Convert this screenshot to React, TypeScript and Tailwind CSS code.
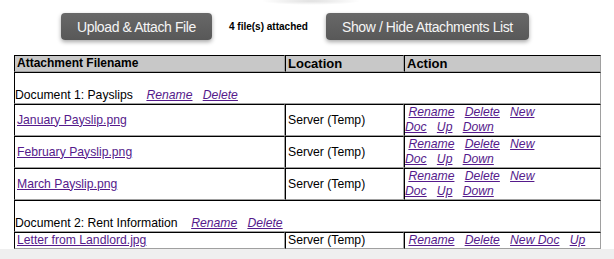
import React from "react";

const NB = "\u00a0";

function L({ children, italic = false }: { children: React.ReactNode; italic?: boolean }) {
  return (
    <a href="#" className={`text-[#551a8b] underline ${italic ? "italic" : ""}`}>
      {children}
    </a>
  );
}

const bd =
  "border-t border-l border-r border-b border-t-black border-l-black border-r-[#a0a0a0] border-b-[#a0a0a0] py-0 align-middle";
const td = `${bd} px-[2px]`;

function Actions({ last = false }: { last?: boolean }) {
  return (
    <td className={`${bd} px-0`}>
      {NB}
      <L italic>Rename</L>
      {NB + NB + NB}
      <L italic>Delete</L>
      {NB + NB + NB}
      <L italic>New Doc</L>
      {NB + NB + NB}
      <L italic>Up</L>
      {!last && (
        <>
          {NB + NB + NB}
          <L italic>Down</L>
        </>
      )}
    </td>
  );
}

function FileRow({ name, last = false }: { name: string; last?: boolean }) {
  return (
    <tr className={last ? "h-[17px]" : "h-[32px]"}>
      <td className={td}>
        <L>{name}</L>
      </td>
      <td className={td}>Server (Temp)</td>
      <Actions last={last} />
    </tr>
  );
}

function DocRow({ title }: { title: string }) {
  return (
    <tr className="h-[32px]">
      <td colSpan={3} className={`${bd} px-0`}>
        <br />
        {title}
        {NB + NB + NB + NB}
        <L italic>Rename</L>
        {NB + NB + NB}
        <L italic>Delete</L>
      </td>
    </tr>
  );
}

const btn =
  "h-[27px] rounded-[4px] bg-[linear-gradient(#686868,#585858)] text-[#f5f5f5] text-[14px] tracking-[-0.4px] leading-none shadow-[0_2px_4px_rgba(0,0,0,0.35)]";

export default function App() {
  return (
    <div className="w-[614px] h-[259px] overflow-hidden bg-white font-['Liberation_Sans',Arial,sans-serif] text-black flex flex-col">
      <div className="h-0 flex justify-center">
        <div className="w-[100px] h-[8px] -mt-[3px] ml-[8px] rounded-full bg-[radial-gradient(ellipse_at_center,rgba(0,0,0,0.12),rgba(0,0,0,0)_70%)]" />
      </div>
      <div className="flex items-center pl-[61px] pt-[13px] h-[27px] box-content">
        <button className={`${btn} w-[151px]`}>Upload &amp; Attach File</button>
        <span className="ml-[17px] text-[10px] font-bold leading-none">4 file(s) attached</span>
        <button className={`${btn} ml-[18px] w-[203px]`}>Show / Hide Attachments List</button>
      </div>
      <div className="pt-[15px] pl-[14px]">
        <table className="w-[587px] table-fixed border-separate border-spacing-0 text-[12.2px] leading-[15px]">
          <colgroup>
            <col className="w-[271px]" />
            <col className="w-[119px]" />
            <col className="w-[197px]" />
          </colgroup>
          <thead>
            <tr className="h-[17px] bg-[#c8c8c8]">
              <th className={`${td} text-left font-bold text-[12px]`}>Attachment Filename</th>
              <th className={`${td} text-left font-bold text-[13px]`}>Location</th>
              <th className={`${td} text-left font-bold text-[13px]`}>Action</th>
            </tr>
          </thead>
          <tbody>
            <DocRow title="Document 1: Payslips" />
            <FileRow name="January Payslip.png" />
            <FileRow name="February Payslip.png" />
            <FileRow name="March Payslip.png" />
            <DocRow title="Document 2: Rent Information" />
            <FileRow name="Letter from Landlord.jpg" last />
          </tbody>
        </table>
      </div>
      <div className="flex-1 bg-[#efefef]" />
    </div>
  );
}
